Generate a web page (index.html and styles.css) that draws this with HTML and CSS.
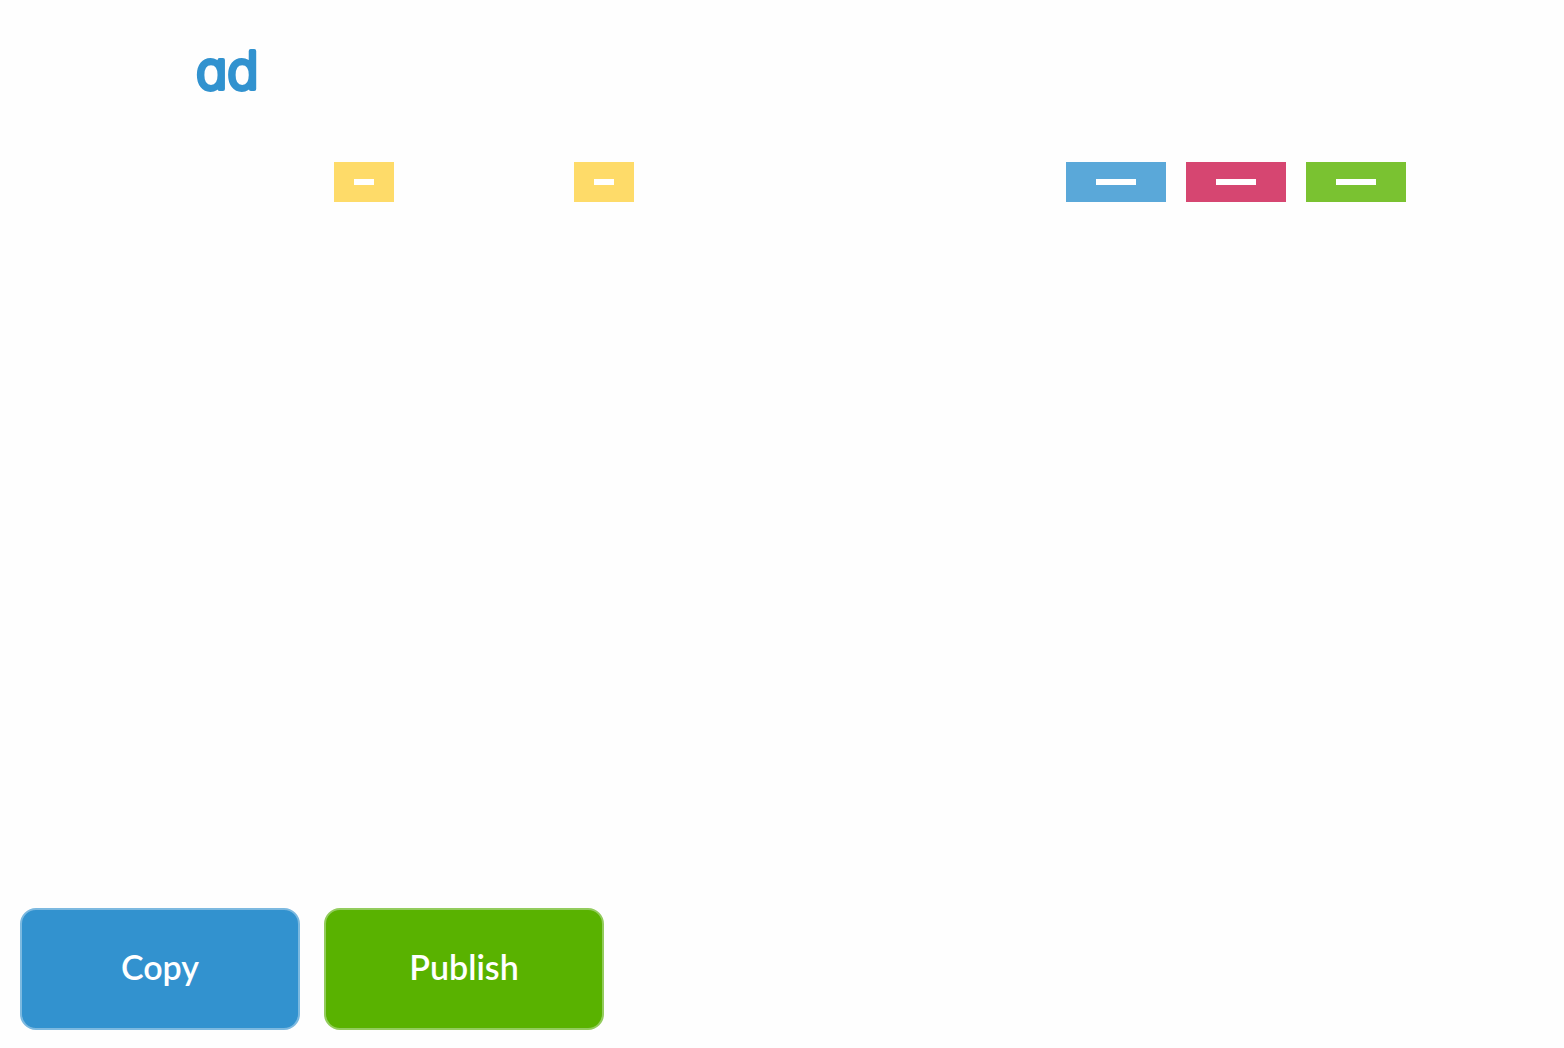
FILE: index.html
```html
<!DOCTYPE html>
<html lang="en">
<head>
<meta charset="utf-8">
<meta name="viewport" content="width=device-width, initial-scale=1">
<title>ad</title>
<link rel="stylesheet" href="styles.css">
</head>
<body>
<div class="page">
  <header class="header">
    <a class="logo" href="#">
      <svg class="logo-mark" width="80" height="84" viewBox="0 0 80 84">
        <text class="logo-text" x="4" y="61">ad</text>
      </svg>
    </a>
  </header>
  <main class="toolbar">
    <div class="group group-wide">
      <button class="chip chip-small yellow" type="button" aria-label="Option 1"><span class="dash"></span></button>
      <button class="chip chip-small yellow" type="button" aria-label="Option 2"><span class="dash"></span></button>
    </div>
    <div class="group">
      <button class="chip blue" type="button" aria-label="Blue"><span class="dash"></span></button>
      <button class="chip pink" type="button" aria-label="Pink"><span class="dash"></span></button>
      <button class="chip green" type="button" aria-label="Green"><span class="dash"></span></button>
    </div>
  </main>
  <footer class="actions">
    <button class="action copy" type="button">Copy</button>
    <button class="action publish" type="button">Publish</button>
  </footer>
</div>
</body>
</html>
```
FILE: styles.css
```css
* {
  box-sizing: border-box;
}

body {
  margin: 0;
  background: #fefefe;
  font-family: Lato, "Liberation Sans", sans-serif;
}

.page {
  display: flex;
  flex-direction: column;
  min-height: 100vh;
}

.header {
  display: flex;
  padding: 28px 192px 0;
}

.logo,
.logo-mark {
  display: block;
}

.logo-text {
  fill: #3192cf;
  stroke: #3192cf;
  stroke-width: 4px;
  stroke-linejoin: round;
  font-family: Inter, sans-serif;
  font-size: 52px;
  font-weight: 300;
  font-optical-sizing: none;
  font-feature-settings: "cv11";
}

.toolbar {
  display: flex;
  justify-content: space-between;
  padding: 50px 158px 0 334px;
}

.group {
  display: flex;
  gap: 20px;
}

.group-wide {
  gap: 180px;
}

.chip {
  display: flex;
  align-items: center;
  justify-content: center;
  width: 100px;
  height: 40px;
  padding: 0;
  border: 0;
}

.dash {
  width: 40px;
  height: 6px;
  background: #fff;
}

.chip-small {
  width: 60px;
}

.chip-small .dash {
  width: 20px;
}

.yellow {
  background: #fedb69;
}

.blue {
  background: #5aa8d9;
}

.pink {
  background: #d64671;
}

.green {
  background: #7ac231;
}

.actions {
  display: flex;
  gap: 24px;
  margin-top: auto;
  padding: 0 20px 18px;
}

.action {
  width: 280px;
  height: 122px;
  padding: 0 0 4px;
  border: 2px solid;
  border-radius: 16px;
  color: #fff;
  font-family: inherit;
  font-size: 34px;
  font-weight: 600;
  line-height: 40px;
}

.copy {
  background: #3292cf;
  border-color: #7cb9e0;
}

.publish {
  background: #59b200;
  border-color: #93cc5d;
}
```
